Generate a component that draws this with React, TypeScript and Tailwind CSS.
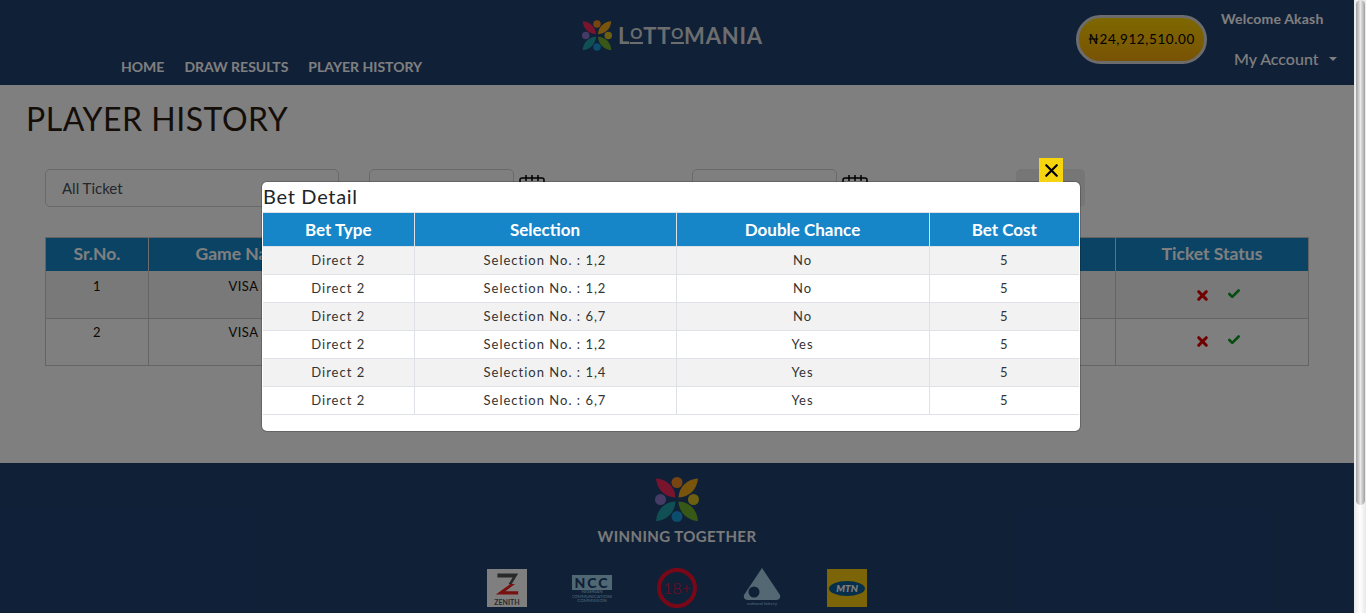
import { Check, X } from 'lucide-react'

const betRows = [
  ['Direct 2', 'Selection No. : 1,2', 'No', '5'],
  ['Direct 2', 'Selection No. : 1,2', 'No', '5'],
  ['Direct 2', 'Selection No. : 6,7', 'No', '5'],
  ['Direct 2', 'Selection No. : 1,2', 'Yes', '5'],
  ['Direct 2', 'Selection No. : 1,4', 'Yes', '5'],
  ['Direct 2', 'Selection No. : 6,7', 'Yes', '5'],
]

const Flower = ({ className }: { className: string }) => (
  <svg viewBox="0 0 44 45" className={className}>
    <path d="M1 1.5C11 2 20 9 20.5 20.5C9 20 2 12 1 1.5Z" fill="#f0285a" />
    <path d="M43 1.5C33 2 24 9 23.5 20.5C35 20 42 12 43 1.5Z" fill="#f0a818" />
    <path d="M1 44C11 43.5 20 36 20.5 24.5C9 25 2 33 1 44Z" fill="#20a0a8" />
    <path d="M43 44C33 43.5 24 36 23.5 24.5C35 25 42 33 43 44Z" fill="#70b030" />
    <circle cx="22" cy="5.5" r="5.5" fill="#f08a20" />
    <circle cx="5.5" cy="22.5" r="5.5" fill="#8878c8" />
    <circle cx="38.5" cy="22.5" r="5.5" fill="#d8c020" />
    <circle cx="22" cy="39.5" r="5.5" fill="#1898d8" />
  </svg>
)

const CalendarIcon = () => (
  <svg viewBox="0 0 26 26" className="w-[26px] h-[26px] mt-[6px] ml-[5px]" fill="none" stroke="#000" strokeWidth="1.5">
    <rect x="1" y="3" width="24" height="21" rx="2" />
    <path d="M1 9H25M7 0V6M13 0V6M19 0V6" />
  </svg>
)

const DateField = () => (
  <div className="flex items-start">
    <div className="w-[145px] h-[38px] rounded-[5px] border border-[#ced4da] bg-white" />
    <CalendarIcon />
  </div>
)

const StatusIcons = ({ top }: { top: string }) => (
  <div className={`flex justify-center items-center gap-[17px] pl-[11px] ${top}`}>
    <X size={15} strokeWidth={5} className="text-[#e00000]" />
    <Check size={14} strokeWidth={4.5} className="text-[#0a9a20] -mt-[3px]" />
  </div>
)

const App = () => {
  return (
    <div className="h-[613px] flex overflow-hidden bg-white font-['Lato','DejaVu_Sans',sans-serif]">
      <div className="relative flex-1 min-w-0 overflow-hidden">
        <header className="h-[85px] bg-[#1f406f] grid grid-cols-[582px_180px_1fr]">
          <nav className="self-end flex gap-5 pl-[121px] pb-[9px] text-[14px] leading-[18px] font-bold text-[#ffffff]">
            <span>HOME</span>
            <span>DRAW RESULTS</span>
            <span>PLAYER HISTORY</span>
          </nav>
          <div className="flex items-start pt-[20px]">
            <Flower className="w-[30px] h-[31px] shrink-0" />
            <div className="ml-[6px] mt-[2px] flex items-start text-[22px] leading-[28px] font-bold tracking-[0.8px] text-[#d8dadc]">
              <span>L</span>
              <span className="text-[15px] leading-[17px] border-b-[2px] border-[#d8dadc] mt-[3px]">O</span>
              <span>TT</span>
              <span className="text-[15px] leading-[17px] border-b-[2px] border-[#d8dadc] mt-[3px]">O</span>
              <span>MANIA</span>
            </div>
          </div>
          <div className="flex items-start pl-[314px]">
            <div className="mt-[15px] w-[131px] h-[49px] rounded-[25px] border-[3px] border-[#d8d8d8] bg-gradient-to-b from-[#fbd000] to-[#f2a60a] flex items-center justify-center text-[13.5px] tracking-[0.6px] text-black">
              ₦24,912,510.00
            </div>
            <div className="ml-[14px] text-[#ffffff]">
              <div className="mt-[10px] text-[14px] leading-[18px] font-bold tracking-[0.2px] whitespace-nowrap">Welcome Akash</div>
              <div className="mt-[21px] ml-[13px] flex items-center text-[16px] leading-[20px] font-medium whitespace-nowrap">
                My Account
                <span className="ml-[10px] w-0 h-0 border-x-[4px] border-x-transparent border-t-[4px] border-t-white" />
              </div>
            </div>
          </div>
        </header>

        <main className="h-[378px] px-[45px] pt-[14px] bg-white relative">
          <h1 className="-ml-[19px] text-[32px] leading-[40px] text-[#2b1d10] tracking-[0.5px]">PLAYER HISTORY</h1>
          <div className="mt-[30px] flex items-start">
            <div className="w-[294px] h-[38px] rounded-[5px] border border-[#ced4da] pl-[16px] text-[15px] leading-[36px] text-[#495057]">
              All Ticket
            </div>
            <div className="ml-[30px]"><DateField /></div>
            <div className="ml-[147px]"><DateField /></div>
            <div className="ml-[148px] w-[69px] h-[38px] rounded-[5px] bg-[#ececec]" />
          </div>
          <table className="mt-[30px] w-[1264px] table-fixed border-collapse text-center border border-[#c8c8c8]">
            <thead>
              <tr className="h-[33px] bg-[#1686c9] text-white text-[17.5px]">
                <th className="w-[103px] border-r border-[#d8d8d8] font-bold">Sr.No.</th>
                <th className="w-[190px] border-r border-[#d8d8d8] font-bold">Game Name</th>
                <th className="border-r border-[#d8d8d8]" />
                <th className="w-[193px] font-bold">Ticket Status</th>
              </tr>
            </thead>
            <tbody className="text-[13px] text-[#1a1008] tracking-[0.5px]">
              <tr className="h-[48px] bg-[#f2f2f2] align-top border-b border-[#c8c8c8]">
                <td className="border-r border-[#c8c8c8] pt-[6px]">1</td>
                <td className="border-r border-[#c8c8c8] pt-[6px]">VISA</td>
                <td className="border-r border-[#c8c8c8]" />
                <td><StatusIcons top="pt-[17px]" /></td>
              </tr>
              <tr className="h-[47px] align-top">
                <td className="border-r border-[#c8c8c8] pt-[4px]">2</td>
                <td className="border-r border-[#c8c8c8] pt-[4px]">VISA</td>
                <td className="border-r border-[#c8c8c8]" />
                <td><StatusIcons top="pt-[15px]" /></td>
              </tr>
            </tbody>
          </table>
        </main>

        <footer className="h-[150px] bg-[#1f406f] pt-[14px] flex flex-col items-center">
          <Flower className="w-[44px] h-[45px] shrink-0" />
          <div className="mt-[5px] text-[15px] leading-[18px] font-bold tracking-[0.4px] text-[#f4f4f4]">WINNING TOGETHER</div>
          <div className="mt-[24px] flex gap-[45px]">
            <div className="w-[40px] h-[38px] bg-white flex flex-col items-center pt-[1px]">
              <svg viewBox="0 0 40 28" className="w-[32px] h-[28px]">
                <path d="M8 1H34L26 14H22L27 6H8Z" fill="#555" />
                <path d="M24 14H30L18 23H34V27H6Z" fill="#f02020" />
              </svg>
              <span className="text-[7px] leading-[8px] font-bold text-[#555]">ZENITH</span>
            </div>
            <div className="w-[40px] h-[38px] flex flex-col items-center pt-[6px] text-[#a0d0e8] overflow-hidden">
              <span className="w-[40px] h-[15px] bg-[#a0d0e8] text-[#1f406f] text-[14px] leading-[15px] font-black text-center tracking-[2px]">NCC</span>
              <span className="text-[4.5px] leading-[4.5px] text-center whitespace-nowrap">NIGERIAN<br />COMMUNICATIONS<br />COMMISSION</span>
            </div>
            <div className="w-[40px] h-[40px] -mt-[1px] rounded-full border-[4px] border-[#f01030] flex items-center justify-center text-[16px] font-light text-[#f01030]">
              18+
            </div>
            <div className="w-[40px] h-[40px] -mt-[1px] flex flex-col items-center">
              <svg viewBox="0 0 38 33" className="w-[38px] h-[33px] shrink-0">
                <path d="M19 0L37 27Q38 32 33 32H5Q0 32 1 27Z" fill="#a8d0e8" />
                <circle cx="11" cy="24" r="5.5" fill="#1f406f" />
              </svg>
              <span className="text-[4.5px] leading-[5px] text-[#a0d0e8] whitespace-nowrap">national lottery</span>
            </div>
            <div className="w-[40px] h-[38px] bg-[#f8c810] flex items-center justify-center">
              <div className="w-[36px] h-[15px] rounded-[50%] bg-[#0c5f96] text-center text-[10px] leading-[15px] italic font-black text-white">MTN</div>
            </div>
          </div>
        </footer>

        <div className="absolute inset-0 bg-black/50" />

        <div className="absolute left-[262px] top-[182px] w-[818px] h-[249px] rounded-[5px] bg-white shadow-[0_0_0_1px_rgba(0,0,0,0.2)]">
          <button className="absolute right-[17px] -top-[24px] w-[24px] h-[24px] bg-[#f6d40e] flex items-center justify-center">
            <X size={21} strokeWidth={2.5} className="text-black" />
          </button>
          <h2 className="h-[30px] pl-[1px] text-[20px] leading-[29px] tracking-[0.7px] text-[#212529]">Bet Detail</h2>
          <table className="ml-[1px] w-[816px] table-fixed border-collapse text-center">
            <thead>
              <tr className="h-[34px] bg-[#1686c9] text-white text-[17px] border-y border-[#dee2e6]">
                <th className="w-[151px] border-r border-[#dee2e6] font-bold">Bet Type</th>
                <th className="w-[262px] border-r border-[#dee2e6] font-bold">Selection</th>
                <th className="w-[253px] border-r border-[#dee2e6] font-bold">Double Chance</th>
                <th className="font-bold">Bet Cost</th>
              </tr>
            </thead>
            <tbody className="text-[13px] tracking-[1px] text-[#333]">
              {betRows.map((row, i) => (
                <tr key={i} className={i % 2 === 0 ? 'h-[28px] bg-[#f2f2f2] border-b border-[#dee2e6]' : 'h-[28px] bg-white border-b border-[#dee2e6]'}>
                  {row.map((cell, j) => (
                    <td key={j} className={j < 3 ? 'border-r border-[#dee2e6]' : ''}>{cell}</td>
                  ))}
                </tr>
              ))}
            </tbody>
          </table>
        </div>
      </div>

      <div className="w-[12px] shrink-0 bg-gradient-to-r from-[#e8e8e8] via-white to-[#e8e8e8]">
        <div className="mx-auto w-[9px] h-[505px] rounded-full bg-gradient-to-r from-[#a0a0a0] via-[#e8e8e8] to-[#a0a0a0]" />
      </div>
    </div>
  )
}

export default App
